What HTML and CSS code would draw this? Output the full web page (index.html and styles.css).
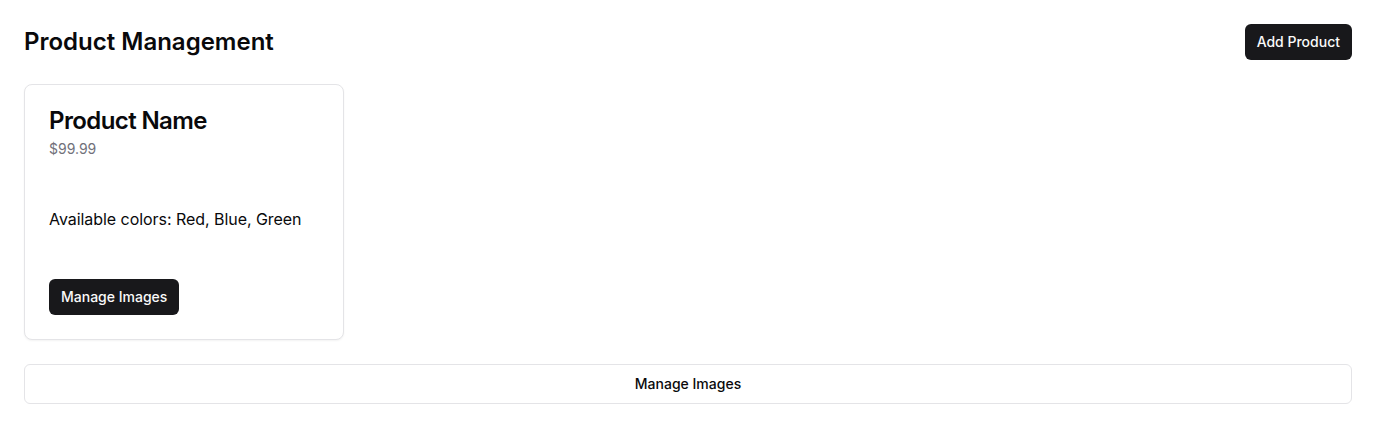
FILE: index.html
```html
<!DOCTYPE html>
<html lang="en">
<head>
<meta charset="utf-8">
<title>Product Management</title>
<link rel="stylesheet" href="styles.css">
</head>
<body>
<main class="page">
  <header class="page-header">
    <h1 class="page-title">Product Management</h1>
    <button class="btn btn-primary">Add Product</button>
  </header>
  <section class="grid">
    <article class="card">
      <div class="card-header">
        <h2 class="card-title">Product Name</h2>
        <p class="card-desc">$99.99</p>
      </div>
      <div class="card-content">
        <p>Available colors: Red, Blue, Green</p>
      </div>
      <div class="card-footer">
        <button class="btn btn-primary">Manage Images</button>
      </div>
    </article>
  </section>
  <button class="btn btn-outline btn-wide">Manage Images</button>
</main>
</body>
</html>
```

FILE: styles.css
```css
* { box-sizing: border-box; margin: 0; padding: 0; }
html, body { background: #ffffff; }
body {
  font-family: Inter, "Noto Sans", sans-serif;
  color: #09090b;
}
.page {
  padding: 24px;
  display: flex;
  flex-direction: column;
  gap: 24px;
}
.page-header {
  display: flex;
  justify-content: space-between;
  align-items: center;
}
.page-title {
  font-size: 24px;
  line-height: 32px;
  font-weight: 600;
}
.btn {
  font-family: inherit;
  font-size: 14px;
  line-height: 20px;
  font-weight: 500;
  border-radius: 6px;
  cursor: pointer;
  display: inline-flex;
  align-items: center;
  justify-content: center;
}
.btn-primary {
  background: #18181b;
  color: #fafafa;
  border: none;
  height: 36px;
  padding: 0 12px;
}
.btn-outline {
  background: #ffffff;
  color: #09090b;
  border: 1px solid #e4e4e7;
  height: 40px;
}
.btn-wide { width: 100%; }
.grid {
  display: grid;
  grid-template-columns: 320px;
}
.card {
  border: 1px solid #e4e4e7;
  border-radius: 8px;
  background: #fff;
  box-shadow: 0 1px 2px rgba(0,0,0,0.05);
  display: flex;
  flex-direction: column;
}
.card-header {
  padding: 24px;
  display: flex;
  flex-direction: column;
  gap: 6px;
}
.card-title {
  font-size: 24px;
  line-height: 24px;
  font-weight: 600;
  letter-spacing: -0.6px;
}
.card-desc {
  font-size: 14px;
  line-height: 20px;
  color: #71717a;
}
.card-content {
  padding: 24px;
  font-size: 16px;
  line-height: 24px;
  letter-spacing: -0.05px;
}
.card-footer {
  padding: 24px;
  display: flex;
}
```
